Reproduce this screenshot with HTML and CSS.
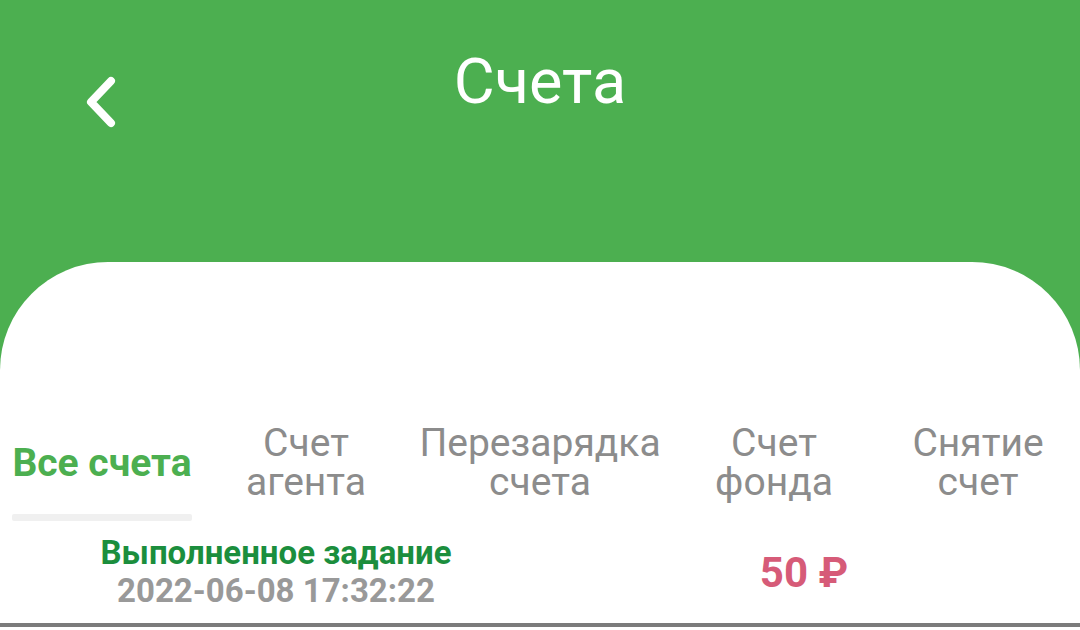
FILE: index.html
```html
<!DOCTYPE html>
<html lang="ru">
<head>
<meta charset="utf-8">
<title>Счета</title>
<link rel="stylesheet" href="styles.css">
</head>
<body>
<div class="screen">
  <header class="topbar">
    <button class="back" aria-label="Назад">
      <svg width="40" height="60" viewBox="0 0 40 60"><path d="M27 9 L7 30 L27 51" fill="none" stroke="#fff" stroke-width="8" stroke-linecap="round" stroke-linejoin="round"/></svg>
    </button>
    <h1 class="title">Счета</h1>
  </header>
  <main class="card">
    <nav class="tabs">
      <div class="tab active"><span class="tab-label">Все счета</span><span class="tab-bar"></span></div>
      <div class="tab"><span class="tab-label">Счет<br>агента</span><span class="tab-bar"></span></div>
      <div class="tab"><span class="tab-label">Перезарядка<br>счета</span><span class="tab-bar"></span></div>
      <div class="tab"><span class="tab-label">Счет<br>фонда</span><span class="tab-bar"></span></div>
      <div class="tab"><span class="tab-label">Снятие<br>счет</span><span class="tab-bar"></span></div>
    </nav>
    <div class="record">
      <div class="record-info">
        <div class="record-name">Выполненное задание</div>
        <div class="record-date">2022-06-08 17:32:22</div>
      </div>
      <div class="record-amount">50 ₽</div>
    </div>
  </main>
</div>
</body>
</html>
```
FILE: styles.css
```css
* { box-sizing: border-box; }
html, body { margin: 0; padding: 0; }
body {
  width: 1080px;
  height: 630px;
  overflow: hidden;
  font-family: Roboto, "Noto Sans", sans-serif;
  background: #4caf50;
}
.screen {
  display: flex;
  flex-direction: column;
  height: 630px;
}
.topbar {
  position: relative;
  height: 262px;
  display: flex;
  justify-content: center;
  align-items: flex-start;
}
.back {
  position: absolute;
  left: 84px;
  top: 72px;
  width: 40px;
  height: 60px;
  padding: 0;
  border: 0;
  background: none;
}
.back svg { display: block; }
.title {
  margin: 42px 0 0;
  color: #fff;
  font-size: 63px;
  font-weight: 400;
  line-height: 80px;
}
.card {
  flex: 1;
  background: #fff;
  border-radius: 108px 108px 0 0;
  padding-top: 162px;
  display: flex;
  flex-direction: column;
}
.tabs {
  display: flex;
}
.tab {
  min-width: 204px;
  padding: 0 12px;
  display: flex;
  flex-direction: column;
  align-items: stretch;
}
.tab-label {
  height: 78px;
  display: flex;
  align-items: center;
  justify-content: center;
  text-align: center;
  font-size: 39px;
  line-height: 39px;
  color: #8c8c8c;
  white-space: nowrap;
}
.tab.active .tab-label {
  color: #4caf50;
  font-weight: 700;
}
.tab-bar {
  display: block;
  height: 7px;
  margin-top: 12px;
  border-radius: 2px;
}
.tab.active .tab-bar { background: #f0f0f0; }
.record {
  margin-top: 10px;
  display: grid;
  grid-template-columns: 552px 1fr;
  align-items: center;
  padding: 0 24px 10px 0;
  height: 96px;
  border-bottom: 4px solid #7b7b7b;
}
.record-info {
  display: flex;
  flex-direction: column;
  align-items: center;
}
.record-name {
  color: #1b8e3d;
  font-size: 33px;
  font-weight: 700;
  line-height: 38px;
}
.record-date {
  color: #999;
  font-size: 33px;
  font-weight: 700;
  line-height: 38px;
}
.record-amount {
  text-align: center;
  color: #d65b78;
  font-size: 42px;
  font-weight: 700;
}
```
